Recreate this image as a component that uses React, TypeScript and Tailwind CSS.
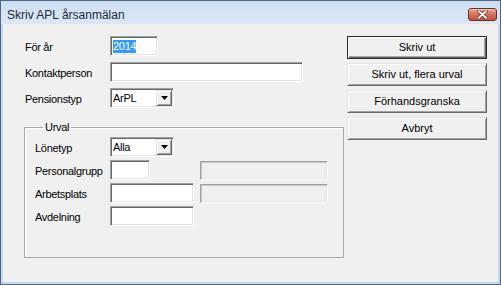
import React from 'react'

const sunken =
  'border border-t-[#a0a0a0] border-l-[#a0a0a0] border-b-white border-r-white shadow-[inset_1px_1px_0_#696969,inset_-1px_-1px_0_#e3e3e3]'

const raised =
  'border border-t-[#e3e3e3] border-l-[#e3e3e3] border-r-[#696969] border-b-[#696969] shadow-[inset_1px_1px_0_#fff,inset_-1px_-1px_0_#a0a0a0]'

function Input({ className, children }: { className: string; children?: React.ReactNode }) {
  return <div className={`flex h-[20px] items-center bg-white pl-[2px] ${sunken} ${className}`}>{children}</div>
}

function Disabled() {
  return (
    <div className="ml-auto h-[19px] w-[128px] border border-t-[#a0a0a0] border-l-[#a0a0a0] border-b-white border-r-white bg-[#f0f0f0] shadow-[inset_1px_1px_0_#c8c8c8,inset_-1px_-1px_0_#e3e3e3]" />
  )
}

function Select({ value }: { value: string }) {
  return (
    <div className={`flex h-[20px] w-[64px] bg-white p-px ${sunken}`}>
      <span className="flex-1 pl-px leading-[16px]">{value}</span>
      <div className={`flex h-[16px] w-[16px] items-center justify-center bg-[#f0f0f0] ${raised}`}>
        <svg width="7" height="4" viewBox="0 0 7 4">
          <polygon points="0,0 7,0 3.5,4" fill="#000" />
        </svg>
      </div>
    </div>
  )
}

function Button({ label, primary }: { label: string; primary?: boolean }) {
  return (
    <button
      type="button"
      className={
        primary
          ? 'h-[23px] w-[140px] border border-[#2a2a2a] bg-[#f0f0f0] shadow-[inset_1px_1px_0_#fff,inset_-1px_-1px_0_#696969,inset_-2px_-2px_0_#a0a0a0] text-center leading-[21px]'
          : `h-[23px] w-[140px] bg-[#f0f0f0] text-center leading-[21px] ${raised}`
      }
    >
      {label}
    </button>
  )
}

function Row({ label, labelWidth, children }: { label: string; labelWidth: string; children: React.ReactNode }) {
  return (
    <div className="flex h-[20px] items-center">
      <span className={`${labelWidth} shrink-0 pt-[2px]`}>{label}</span>
      {children}
    </div>
  )
}

export default function App() {
  return (
    <div className="flex h-[285px] w-[501px] flex-col border border-[#4f6789] bg-[#c3d7ee] font-['Liberation_Sans',Arial,sans-serif] text-[11px] tracking-[-0.3px] text-black">
      <div className="flex h-[23px] shrink-0 items-start justify-between bg-gradient-to-b from-[#cfdff2] to-[#dbe7f5] pl-[6px] pr-[3px] pt-[7px]">
        <span className="text-[12px] leading-[14px] tracking-normal text-[#1e2a3a]">Skriv APL årsanmälan</span>
        <div className="flex h-[13px] w-[29px] items-center justify-center rounded-[3px] border border-[#6d2b21] bg-gradient-to-b from-[#e9a898] via-[#d6705c] to-[#c4523d] shadow-[inset_0_1px_0_#f4c7bb]">
          <svg width="11" height="9" viewBox="0 0 11 9">
            <path d="M1.5 1 L9.5 8 M9.5 1 L1.5 8" stroke="#5a2018" strokeWidth="3.2" strokeLinecap="round" />
            <path d="M1.5 1 L9.5 8 M9.5 1 L1.5 8" stroke="#fff" strokeWidth="1.8" strokeLinecap="round" />
          </svg>
        </div>
      </div>

      <div className="mx-[2px] mb-[2px] flex flex-1 bg-[#f0f0f0] pl-[21px] pr-[11px] pt-[12px]">
        <div className="flex w-[320px] flex-col">
          <div className="ml-px flex flex-col gap-[6px]">
            <Row label="För år" labelWidth="w-[85px]">
              <Input className="w-[48px]">
                <span className="bg-[#3399ff] leading-[13px] text-white">2014</span>
              </Input>
            </Row>
            <Row label="Kontaktperson" labelWidth="w-[85px]">
              <Input className="w-[193px]" />
            </Row>
            <Row label="Pensionstyp" labelWidth="w-[85px]">
              <Select value="ArPL" />
            </Row>
          </div>

          <fieldset className="mt-[13px] h-[137px] border border-[#a9a9a9] pl-[10px] pr-[15px] pt-[3px] shadow-[inset_1px_1px_0_#fff]">
            <legend className="ml-[8px] px-[2px] leading-[13px]">Urval</legend>
            <div className="flex flex-col gap-[3px]">
              <Row label="Lönetyp" labelWidth="w-[75px]">
                <Select value="Alla" />
              </Row>
              <Row label="Personalgrupp" labelWidth="w-[75px]">
                <Input className="w-[40px]" />
                <Disabled />
              </Row>
              <Row label="Arbetsplats" labelWidth="w-[75px]">
                <Input className="w-[84px]" />
                <Disabled />
              </Row>
              <Row label="Avdelning" labelWidth="w-[75px]">
                <Input className="w-[84px]" />
              </Row>
            </div>
          </fieldset>
        </div>

        <div className="ml-auto flex flex-col gap-[4px] tracking-normal">
          <Button label="Skriv ut" primary />
          <Button label="Skriv ut, flera urval" />
          <Button label="Förhandsgranska" />
          <Button label="Avbryt" />
        </div>
      </div>
    </div>
  )
}
